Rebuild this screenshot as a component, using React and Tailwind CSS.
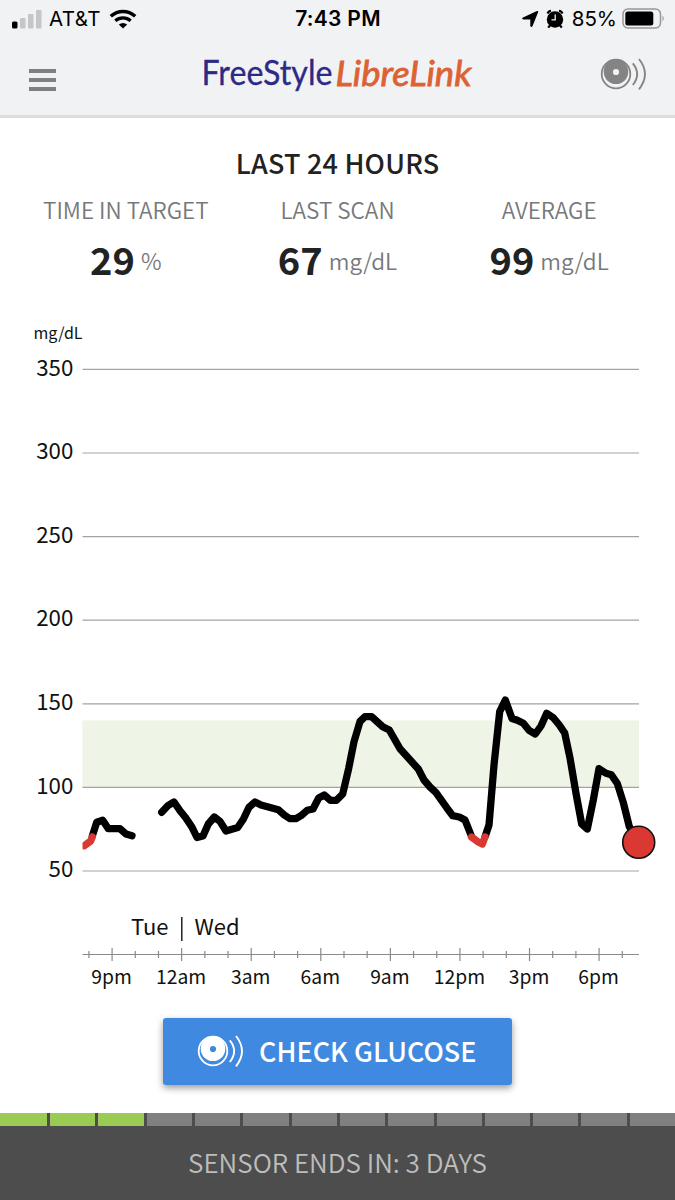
import React from 'react';

const SENSOR_DAYS = 14;
const DAYS_LEFT = 3;

const stats = [
  { label: 'TIME IN TARGET', value: '29', unit: '%' },
  { label: 'LAST SCAN', value: '67', unit: 'mg/dL' },
  { label: 'AVERAGE', value: '99', unit: 'mg/dL' },
];

const hourLabels = ['9pm', '12am', '3am', '6am', '9am', '12pm', '3pm', '6pm'];

// Glucose trace, split where readings are missing or drop below 70
const traces = [
  { low: false, points: '92.3,836 96.7,822.3 102.7,820.3 108.3,828.7 120,828.7 126,834 132,835.7' },
  {
    low: false,
    points:
      '161.7,812.3 168.3,805.3 174,802 180,810.7 185.7,817.7 191.7,826.7 197,837.5 203,836 208.3,824 214.3,817 220,821.3 226,831 237.7,827.5 243.3,819.3 249,807.3 255,802 261,805 278.3,809.7 284.3,815 290,818.7 296,818.7 301,815.7 307.3,810.3 313,809 318.7,798 324.3,795 330.3,800.3 336.3,800.3 342.7,794 348.7,768.3 354,741.7 360,721.5 365,716.7 371.7,716.7 382.7,726.7 389.3,730 400,748.7 418.3,769 424,780 430,787 436,792.7 446.7,807.7 452.7,815.7 459.3,817 465,820 471,835',
  },
  {
    low: false,
    points:
      '485.3,836 489,825 494,765 499.7,711.7 505.3,700 512,718.5 517.3,720.3 523.3,723.3 529,730.3 535.3,734 541,726 546.7,713.3 553.3,717.7 559.3,725 564.7,733 570,758 576,793.3 581.7,824 587.3,829 593.3,800 599,768.7 606,773.3 611.3,774.7 617.3,783.5 623.3,802.5 629.3,826.7 638.5,842',
  },
  { low: true, points: '84.5,845.7 90.7,841 92.3,837' },
  { low: true, points: '471.5,837 477.7,841.7 482.3,844 485,837' },
];

const SensorIcon = ({ color, hole }) => (
  <svg width="48" height="36" viewBox="0 0 48 36" fill="none">
    <circle cx="16" cy="18" r="14.3" stroke={color} strokeWidth="1.8" />
    <circle cx="16" cy="15.8" r="12.3" fill={color} />
    <circle cx="16" cy="16" r="3.1" fill={hole} />
    <path d="M32.8 7.3Q41.5 18 32.8 29" stroke={color} strokeWidth="1.9" />
    <path d="M39 3Q51 18 39 33.4" stroke={color} strokeWidth="1.9" />
  </svg>
);

const StatusBar = () => (
  <div className="grid grid-cols-3 items-center h-[37px] pl-[11px] pr-[10px] text-[20.5px] leading-6 text-black font-['Inter',sans-serif]">
    <div className="flex items-center">
      <svg width="31" height="20" viewBox="0 0 31 20">
        <rect x="1" y="12.5" width="5.5" height="7" rx="1.5" fill="#000" />
        <rect x="9" y="9" width="5.5" height="10.5" rx="1" fill="#c5c6c8" />
        <rect x="17" y="5" width="5.5" height="14.5" rx="1" fill="#c5c6c8" />
        <rect x="25" y="1" width="5.5" height="18.5" rx="1" fill="#c5c6c8" />
      </svg>
      <span className="ml-[7px] tracking-[0.4px]">AT&amp;T</span>
      <svg className="ml-2" width="28" height="20" viewBox="0 0 28 20" fill="none" stroke="#000">
        <path d="M1.8 7.2C9 .9 19 .9 26.2 7.2" strokeWidth="3.5" />
        <path d="M6.3 11.8C10.8 7.9 17.2 7.9 21.7 11.8" strokeWidth="3.2" />
        <path d="M14 19.5L9.8 15.6Q14 12.4 18.2 15.6Z" fill="#000" stroke="none" />
      </svg>
    </div>
    <div className="text-center text-[21px] font-semibold whitespace-nowrap tracking-[0.3px]">7:43 PM</div>
    <div className="flex items-center justify-end">
      <svg width="18" height="18" viewBox="0 0 18 18">
        <path d="M15.4 1.2Q17.8 .2 17 2.6L11.6 16Q10.4 18.2 9.3 16V9.5H2.4Q0 8.7 2 7.4Z" fill="#000" />
      </svg>
      <svg className="ml-[7px]" width="18" height="20" viewBox="0 0 18 20" fill="none" stroke="#000">
        <circle cx="9" cy="10.5" r="8.2" fill="#000" stroke="none" />
        <path d="M1.5 4.5Q2.5 2 5 1.8M16.5 4.5Q15.5 2 13 1.8M4 16.5L2.2 18.6M14 16.5L15.8 18.6" strokeWidth="2.2" />
        <path d="M9.2 5.5V10.8H5.5" stroke="#f1f2f4" strokeWidth="1.3" />
      </svg>
      <span className="ml-[8px]">85%</span>
      <svg className="ml-[5px] shrink-0" width="43" height="21" viewBox="0 0 43 21">
        <rect x="1" y="1" width="37.5" height="19" rx="5" fill="none" stroke="#96979a" strokeWidth="1.5" />
        <rect x="3.3" y="3.5" width="28" height="14" rx="2.5" fill="#000" />
        <path d="M40.5 7.5Q43 10.5 40.5 13.5Z" fill="#96979a" />
      </svg>
    </div>
  </div>
);

const Header = () => (
  <header className="h-[118px] bg-[#f1f2f4] border-b-[3px] border-[#dcdde0]">
    <StatusBar />
    <div className="flex items-start justify-between pl-[29px] pr-[27px] pt-[5px]">
      <div className="flex flex-col gap-[5px] mt-[27px] w-[75px]">
        <div className="w-[27px] h-1 bg-[#808080]"></div>
        <div className="w-[27px] h-1 bg-[#808080]"></div>
        <div className="w-[27px] h-1 bg-[#808080]"></div>
      </div>
      <svg width="285" height="60" viewBox="194 42 285 60">
        <text x="199.5" y="85.2" textLength="131" lengthAdjust="spacingAndGlyphs" fill="#2d2a86" stroke="#2d2a86" strokeWidth="0.3" fontSize="34.5" fontFamily="Lato, sans-serif">FreeStyle</text>
        <text x="333.5" y="85.6" textLength="136" lengthAdjust="spacingAndGlyphs" fill="#dc6234" stroke="#dc6234" strokeWidth="0.8" fontSize="34" fontStyle="italic" fontFamily="Lato, sans-serif">LibreLink</text>
      </svg>
      <div className="flex justify-end w-[75px] mt-3.5">
        <SensorIcon color="#848484" hole="#f1f2f4" />
      </div>
    </div>
  </header>
);

const Stat = ({ label, value, unit }) => (
  <div className="flex flex-col items-center">
    <p className="text-[22.5px] leading-7 text-[#77787a] font-[350] whitespace-nowrap">{label}</p>
    <div className="flex items-center gap-1.5 mt-[13px] leading-[44px]">
      <span className="text-[38px] font-bold text-[#222]">{value}</span>
      <span className="pt-0.5 text-[22.5px] font-[350] text-[#77787a]">{unit}</span>
    </div>
  </div>
);

const GlucoseChart = () => (
  <svg className="block" width="675" height="690" viewBox="0 310 675 690" fontFamily="'Noto Sans CJK SC', sans-serif" fill="#111">
    <defs>
      <clipPath id="plot">
        <rect x="82.5" y="360" width="560" height="600" />
      </clipPath>
    </defs>
    <rect x="82.5" y="720.5" width="556.5" height="67" fill="#eef4e6" />
    <text x="33.5" y="339" fontSize="16">mg/dL</text>
    {[350, 300, 250, 200, 150, 100, 50].map((v, i) => (
      <g key={v}>
        <text x="73.3" y={375.5 + i * 83.6} fontSize="22.3" textAnchor="end">{v}</text>
        <line x1="82.5" x2="639" y1={369.4 + i * 83.6} y2={369.4 + i * 83.6} stroke="#a3a3a3" strokeWidth="1.2" />
      </g>
    ))}
    <line x1="82.5" x2="639" y1="954.5" y2="954.5" stroke="#8a8a8a" strokeWidth="1.2" />
    {Array.from({ length: 24 }, (_, i) => {
      const x = 88.9 + i * 23.19;
      const half = i % 3 === 1 ? 6.5 : 3.5;
      return <line key={i} x1={x} x2={x} y1={954.5 - half} y2={954.5 + half} stroke="#8a8a8a" strokeWidth="1.2" />;
    })}
    {hourLabels.map((h, i) => (
      <text key={h} x={111.6 + i * 69.57} y="983.5" fontSize="19.3" textAnchor="middle">{h}</text>
    ))}
    <text x="168.5" y="935" fontSize="22" textAnchor="end">Tue</text>
    <line x1="181.8" x2="181.8" y1="917" y2="941" stroke="#222" strokeWidth="1.5" />
    <text x="194.5" y="935" fontSize="22">Wed</text>
    <g clipPath="url(#plot)" fill="none" strokeWidth="7.3" strokeLinecap="round" strokeLinejoin="round">
      {traces.map((t) => (
        <polyline key={t.points} points={t.points} stroke={t.low ? '#da3832' : '#000'} />
      ))}
    </g>
    <circle cx="638.7" cy="842.3" r="16" fill="#da3832" stroke="#111" strokeWidth="1.6" />
  </svg>
);

const SensorLife = () => (
  <footer className="mt-auto h-[87px] bg-[#4d4d4d]">
    <div className="flex gap-[3px] h-[13px]">
      {Array.from({ length: SENSOR_DAYS }, (_, i) => (
        <div
          key={i}
          className={`${i === 0 ? 'w-[47px]' : 'flex-1'} ${i < DAYS_LEFT ? 'bg-[#9bcb55]' : 'bg-[#808080]'}`}
        ></div>
      ))}
    </div>
    <p className="mt-5 text-center text-[26px] leading-8 font-[350] text-[#bdbdbd]">SENSOR ENDS IN: 3 DAYS</p>
  </footer>
);

const App = () => (
  <div className="flex flex-col w-[675px] h-[1200px] overflow-hidden bg-white font-['Noto_Sans_CJK_SC',sans-serif]">
    <Header />
    <main>
      <h1 className="mt-[31px] text-center text-[27px] leading-7 font-medium tracking-[0.2px] text-[#222]">LAST 24 HOURS</h1>
      <div className="grid grid-cols-3 mt-[18px] h-[115px] px-5">
        {stats.map((s) => (
          <Stat key={s.label} {...s} />
        ))}
      </div>
      <GlucoseChart />
      <button className="flex items-center mx-auto mt-[18px] w-[349px] h-[67px] pl-[34px] gap-3.5 rounded-[3px] bg-[#4089e0] shadow-[0_3px_7px_rgba(0,0,0,0.4)]">
        <div className="-mt-px">
          <SensorIcon color="#fff" hole="#4089e0" />
        </div>
        <span className="text-[27px] font-medium text-white whitespace-nowrap">CHECK GLUCOSE</span>
      </button>
    </main>
    <SensorLife />
  </div>
);

export default App;
